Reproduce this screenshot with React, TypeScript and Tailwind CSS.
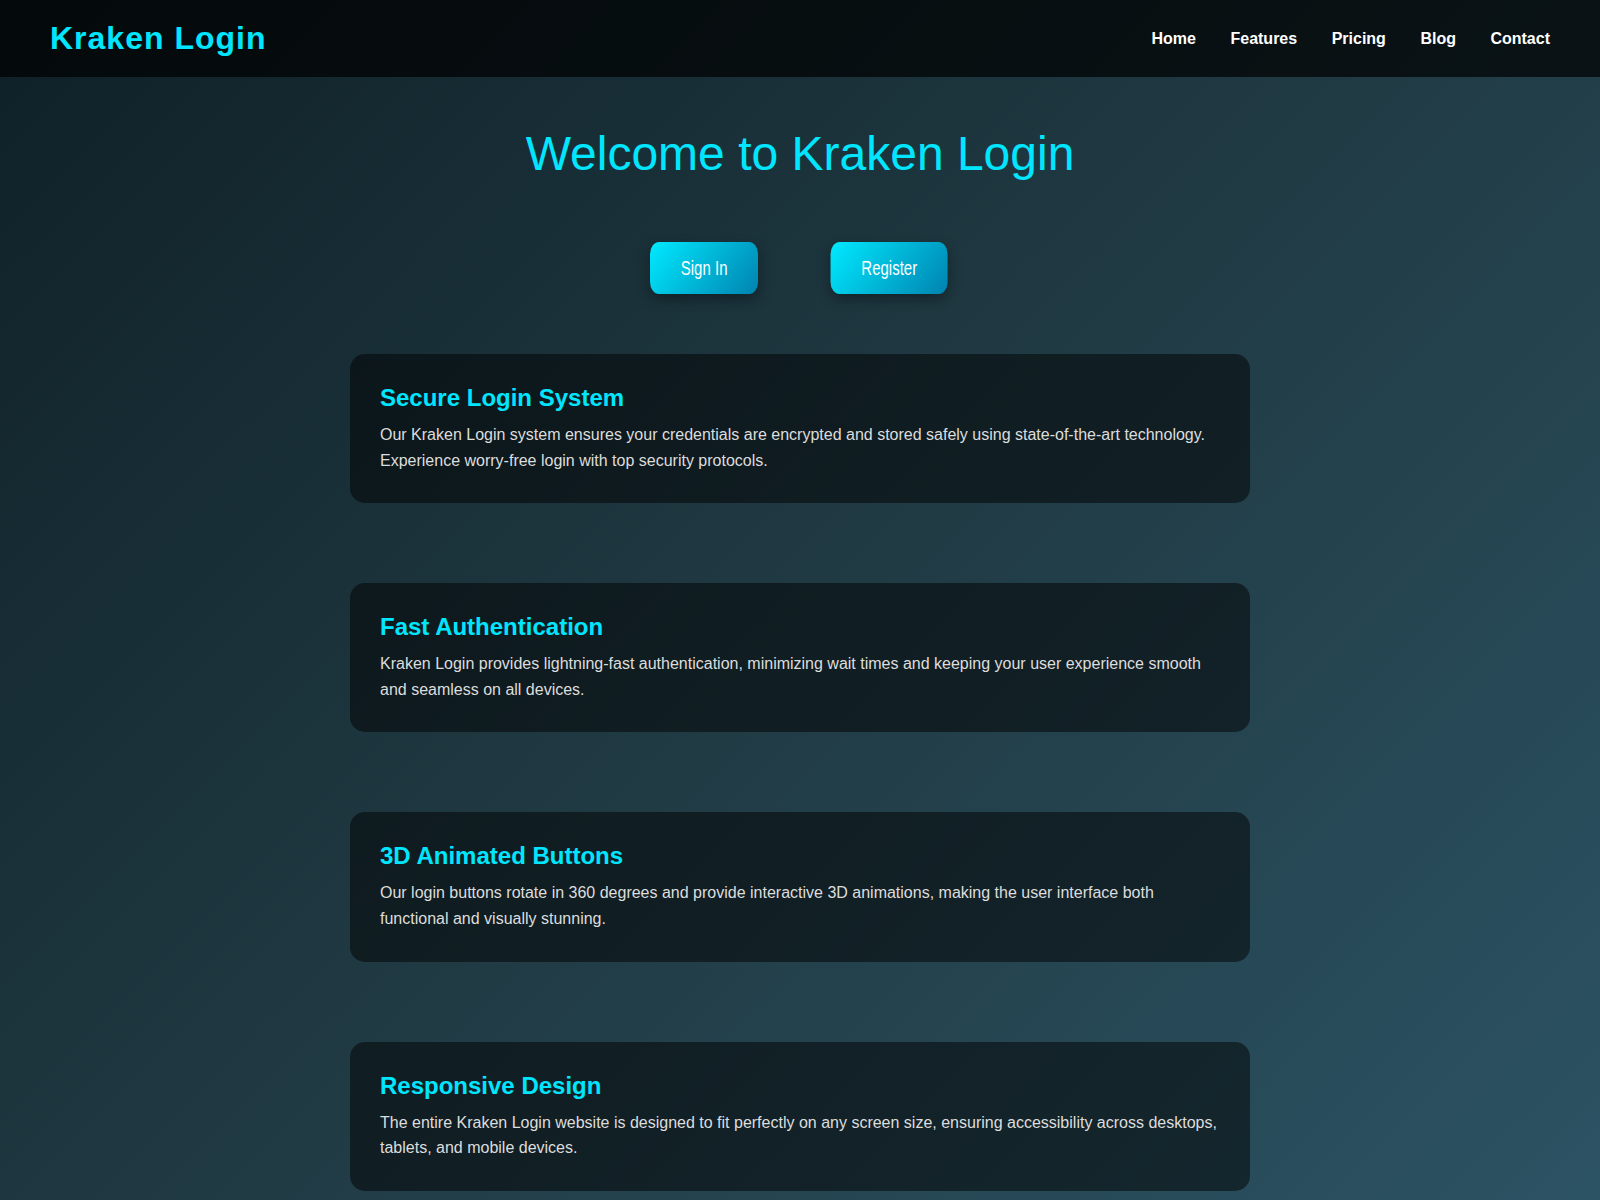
import React from "react";

const features = [
  {
    title: "Secure Login System",
    text: "Our Kraken Login system ensures your credentials are encrypted and stored safely using state-of-the-art technology. Experience worry-free login with top security protocols.",
  },
  {
    title: "Fast Authentication",
    text: "Kraken Login provides lightning-fast authentication, minimizing wait times and keeping your user experience smooth and seamless on all devices.",
  },
  {
    title: "3D Animated Buttons",
    text: "Our login buttons rotate in 360 degrees and provide interactive 3D animations, making the user interface both functional and visually stunning.",
  },
  {
    title: "Responsive Design",
    text: "The entire Kraken Login website is designed to fit perfectly on any screen size, ensuring accessibility across desktops, tablets, and mobile devices.",
  },
];

export default function App() {
  return (
    <div className="min-h-screen bg-fixed bg-[linear-gradient(135deg,#0f2027,#203a43,#2c5364)] font-['Liberation_Sans',Arial,sans-serif] pb-[40px]">
      <header className="h-[77px] bg-black/70 flex items-center justify-between pl-[50px] pr-[50px]">
        <div className="text-[32px] font-bold tracking-[1px] text-[#00e6ff] leading-[normal]">
          Kraken Login
        </div>
        <nav className="flex items-center gap-[34.5px] text-[16px] font-bold text-white leading-[normal]">
          <a href="#">Home</a>
          <a href="#">Features</a>
          <a href="#">Pricing</a>
          <a href="#">Blog</a>
          <a href="#">Contact</a>
        </nav>
      </header>

      <main className="flex flex-col items-center pt-[49px]">
        <h1 className="text-[48px] font-normal leading-[normal] text-[#00e6ff]">
          Welcome to Kraken Login
        </h1>

        <div className="mt-[61px] flex items-center gap-[35px]">
          <button className="h-[52px] px-[41px] rounded-[12px] text-[20px] leading-[normal] text-white bg-[linear-gradient(135deg,#00eaff,#0083b0)] shadow-[0_5px_15px_rgba(0,0,0,0.35)] scale-x-[0.75] font-['Liberation_Sans',Arial,sans-serif]">
            Sign In
          </button>
          <button className="h-[52px] px-[41px] rounded-[12px] text-[20px] leading-[normal] text-white bg-[linear-gradient(135deg,#00eaff,#0083b0)] shadow-[0_5px_15px_rgba(0,0,0,0.35)] scale-x-[0.75] font-['Liberation_Sans',Arial,sans-serif]">
            Register
          </button>
        </div>

        <div className="mt-[60px] w-[900px] flex flex-col gap-[80px]">
          {features.map((f) => (
            <section
              key={f.title}
              className="rounded-[15px] bg-black/50 px-[30px] pt-[30px] pb-[30px]"
            >
              <h2 className="text-[24px] font-bold leading-[normal] text-[#00e6ff] mb-[10px]">
                {f.title}
              </h2>
              <p className="text-[16px] leading-[1.6] text-[#dddddd]">{f.text}</p>
            </section>
          ))}
        </div>
      </main>
    </div>
  );
}
